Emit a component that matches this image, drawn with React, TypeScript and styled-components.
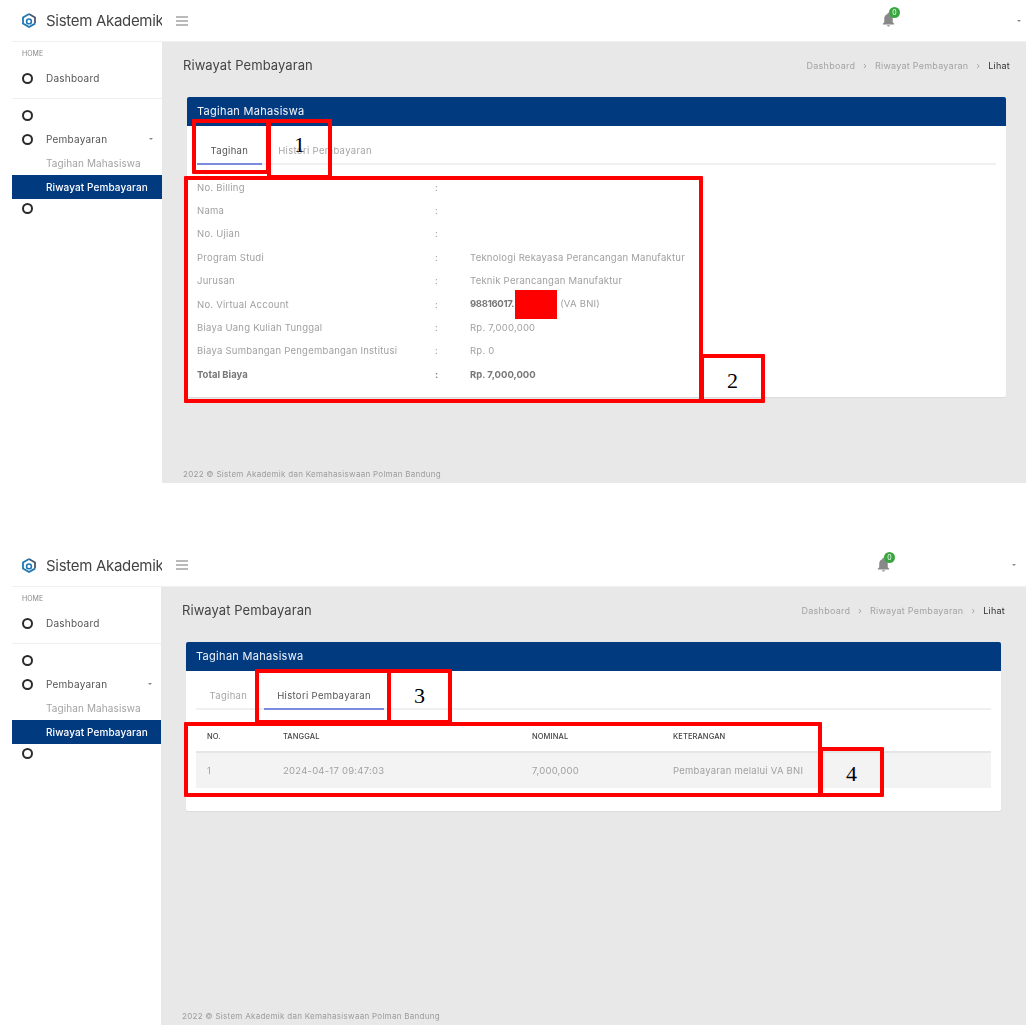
import React from "react";
import styled, { createGlobalStyle } from "styled-components";

const Global = createGlobalStyle`
  html, body { margin: 0; padding: 0; background: #fff; }
  body { font-family: "Inter", "Noto Sans", sans-serif; }
  * { box-sizing: border-box; }
`;

const Page = styled.div`
  width: 1035px;
  height: 1031px;
  overflow: hidden;
  position: relative;
`;

const Shot = styled.section<{ $top: number; $height: number }>`
  position: relative;
  margin-top: ${(p) => p.$top}px;
  margin-left: 12px;
  width: 1014px;
  height: ${(p) => p.$height}px;
`;

const Frame = styled.div`
  display: flex;
  flex-direction: column;
  height: 100%;
  filter: blur(0.3px);
`;

const TopBar = styled.header<{ $height: number; $caretRight: number }>`
  height: ${(p) => p.$height}px;
  flex: none;
  display: flex;
  align-items: center;
  background: #fff;
  border-bottom: 1px solid #f0f0f0;
  padding-right: ${(p) => p.$caretRight}px;
`;

const Brand = styled.div`
  width: 150px;
  flex: none;
  display: flex;
  align-items: center;
  gap: 10px;
  padding-left: 10px;
  overflow: hidden;
  white-space: nowrap;
  font-size: 15px;
  letter-spacing: -0.3px;
  color: #444;

  svg {
    flex: none;
  }
`;

const Burger = styled.svg`
  width: 14px;
  height: 14px;
  margin-left: 13px;
  color: #777;
`;

const BellWrap = styled.div`
  position: relative;
  width: 17px;
  height: 17px;
  margin-left: auto;
  margin-right: 120px;
  margin-bottom: 2px;
  color: #888;
`;

const Badge = styled.span`
  position: absolute;
  left: 9.5px;
  top: -3.7px;
  width: 11px;
  height: 11px;
  border-radius: 50%;
  background: #3aa63f;
  color: #fff;
  font-size: 7px;
  line-height: 11px;
  text-align: center;
`;

const Caret = styled.span`
  width: 0;
  height: 0;
  flex: none;
  border-left: 2.5px solid transparent;
  border-right: 2.5px solid transparent;
  border-top: 2.5px solid #888;
`;

const Body = styled.div`
  flex: 1;
  display: flex;
  min-height: 0;
`;

const Sidebar = styled.nav<{ $width: number }>`
  width: ${(p) => p.$width}px;
  flex: none;
  background: #fff;
  padding-top: 6px;
`;

const MenuCaption = styled.div`
  height: 11px;
  margin-bottom: 7px;
  padding-left: 10px;
  font-size: 7px;
  line-height: 11px;
  color: #888;
`;

const MenuItem = styled.div<{ $height?: number; $sub?: boolean; $active?: boolean }>`
  height: ${(p) => p.$height ?? 24}px;
  display: flex;
  align-items: center;
  padding: 0 8px 0 ${(p) => (p.$sub || p.$active ? 34 : 10)}px;
  font-size: 10px;
  letter-spacing: ${(p) => (p.$sub || p.$active ? 0.1 : 0.22)}px;
  white-space: nowrap;
  font-weight: ${(p) => (p.$active ? 500 : 400)};
  color: ${(p) => (p.$active ? "#fff" : p.$sub ? "#a3a3a3" : "#555")};
  background: ${(p) => (p.$active ? "#023a80" : "transparent")};
`;

const Ring = styled.span`
  width: 11px;
  height: 11px;
  flex: none;
  margin-right: 13px;
  border: 2px solid #2b2b2b;
  border-radius: 50%;
`;

const CaretSlot = styled.span`
  margin-left: auto;
  display: flex;
  padding-right: 1px;
`;

const MenuDivider = styled.hr`
  margin: 8px 0 4px;
  border: 0;
  border-top: 1px solid #eee;
`;

const Main = styled.main<{ $right: number }>`
  flex: 1;
  display: flex;
  flex-direction: column;
  background: #e8e8e8;
  padding: 12px ${(p) => p.$right}px 3px 21px;
  min-width: 0;
`;

const PageHead = styled.div`
  height: 22px;
  display: flex;
  align-items: center;
  justify-content: space-between;
  margin-right: -4px;
`;

const PageTitle = styled.h1`
  margin: 0;
  font-size: 13px;
  font-weight: 400;
  letter-spacing: 0.07px;
  color: #444;
`;

const Crumbs = styled.div`
  display: flex;
  gap: 8px;
  font-size: 9px;
  letter-spacing: 0.25px;
  color: #a3a3a3;
`;

const CrumbNow = styled.span`
  color: #333;
`;

const Card = styled.article`
  margin: 20.5px 0 0 4px;
  background: #fff;
  border-radius: 2px;
  box-shadow: 0 1px 1px rgba(0, 0, 0, 0.06);
`;

const CardHead = styled.div`
  height: 29.5px;
  display: flex;
  align-items: center;
  padding-left: 10px;
  background: #023a80;
  border-radius: 2px 2px 0 0;
  color: #f2f5fa;
  font-size: 11px;
  letter-spacing: 0.3px;
`;

const CardBody = styled.div`
  padding: 0 10px;
`;

const Tabs = styled.div`
  height: 39px;
  display: flex;
  gap: 3px;
  border-bottom: 2px solid #f0f0f0;
`;

const Tab = styled.div<{ $active?: boolean }>`
  height: 39px;
  padding: 18.5px 13.5px 0;
  font-size: 9.5px;
  line-height: 12px;
  letter-spacing: 0.32px;
  white-space: nowrap;
  color: ${(p) => (p.$active ? "#555" : "#a6a6a6")};
  border-bottom: 2px solid ${(p) => (p.$active ? "#7b8bdf" : "transparent")};
`;

const InfoList = styled.div`
  padding: 10.5px 0;
`;

const InfoRow = styled.div<{ $strong?: boolean }>`
  height: 23.4px;
  display: grid;
  grid-template-columns: 238px 35px 1fr;
  align-items: center;
  font-size: 9.5px;
  letter-spacing: ${(p) => (p.$strong ? 0 : 0.24)}px;
  white-space: nowrap;
  color: ${(p) => (p.$strong ? "#777" : "#a0a0a0")};
  font-weight: ${(p) => (p.$strong ? 700 : 400)};
`;

const Bold = styled.b`
  color: #777;
  letter-spacing: -0.3px;
`;

const Redaction = styled.span`
  display: inline-block;
  width: 42px;
  height: 29px;
  margin: -6px 3px -6px 1px;
  vertical-align: middle;
  background: #f00;
`;

const HistoryTable = styled.div`
  margin-top: 14px;
  padding-bottom: 23px;
`;

const HistoryRow = styled.div<{ $head?: boolean }>`
  display: grid;
  grid-template-columns: 76px 249px 141px 1fr;
  align-items: center;
  height: ${(p) => (p.$head ? 29 : 35)}px;
  padding-left: 11px;
  padding-bottom: ${(p) => (p.$head ? 2 : 0)}px;
  font-size: ${(p) => (p.$head ? 7.5 : 9.5)}px;
  letter-spacing: ${(p) => (p.$head ? 0.1 : 0.24)}px;
  font-weight: ${(p) => (p.$head ? 500 : 400)};
  color: ${(p) => (p.$head ? "#444" : "#a0a0a0")};
  background: ${(p) => (p.$head ? "#fff" : "#f3f3f3")};
  border-bottom: ${(p) => (p.$head ? "2px solid #e6e6e6" : "0")};
`;

const Footer = styled.footer`
  margin-top: auto;
  font-size: 8px;
  line-height: 12px;
  letter-spacing: 0.28px;
  color: #9c9c9c;
`;

const Note = styled.div<{ $x: number; $y: number; $w: number; $h: number; $shift?: number }>`
  position: absolute;
  left: ${(p) => p.$x - 12}px;
  top: ${(p) => p.$y}px;
  width: ${(p) => p.$w}px;
  height: ${(p) => p.$h}px;
  border: 4px solid #f00;
  border-radius: 1px;
  display: flex;
  align-items: center;
  justify-content: center;
  padding-top: ${(p) => Math.max(0, (p.$shift ?? 0) * 2)}px;
  padding-bottom: ${(p) => Math.max(0, -(p.$shift ?? 0) * 2)}px;
  font-family: "Liberation Serif", serif;
  font-size: 22px;
  color: #000;
`;

const Logo = () => (
  <svg width="14" height="15" viewBox="0 0 14 15" fill="none">
    <path d="M7 1 L13 4.4 V10.6" stroke="#45596e" strokeWidth="1.8" />
    <path d="M7 1 L1 4.4 V10.6 L7 14 L13 10.6" stroke="#1f78b4" strokeWidth="1.8" />
    <circle cx="7" cy="8.4" r="2.4" stroke="#1f78b4" strokeWidth="1.6" />
  </svg>
);

const BellIcon = () => (
  <svg width="17" height="17" viewBox="0 0 24 24" fill="currentColor">
    <path d="M12 22c1.1 0 2-.9 2-2h-4c0 1.1.9 2 2 2zm6-6v-5c0-3.07-1.63-5.64-4.5-6.32V4c0-.83-.67-1.5-1.5-1.5s-1.5.67-1.5 1.5v.68C7.64 5.36 6 7.92 6 11v5l-2 2v1h16v-1l-2-2z" />
  </svg>
);

const BurgerIcon = () => (
  <Burger viewBox="0 0 14 14" fill="none" stroke="currentColor" strokeWidth="1.1">
    <path d="M1 3h12M1 7h12M1 11h12" />
  </Burger>
);

type ChromeProps = {
  headerHeight: number;
  sidebarWidth: number;
  mainRight: number;
  children: React.ReactNode;
};

const Chrome = ({ headerHeight, sidebarWidth, mainRight, children }: ChromeProps) => (
  <Frame>
    <TopBar $height={headerHeight} $caretRight={mainRight === 25 ? 10.5 : 5.5}>
      <Brand>
        <Logo />
        Sistem Akademik
      </Brand>
      <BurgerIcon />
      <BellWrap>
        <BellIcon />
        <Badge>0</Badge>
      </BellWrap>
      <Caret />
    </TopBar>
    <Body>
      <Sidebar $width={sidebarWidth}>
        <MenuCaption>HOME</MenuCaption>
        <MenuItem>
          <Ring />
          Dashboard
        </MenuItem>
        <MenuDivider />
        <MenuItem>
          <Ring />
        </MenuItem>
        <MenuItem>
          <Ring />
          Pembayaran
          <CaretSlot>
            <Caret />
          </CaretSlot>
        </MenuItem>
        <MenuItem $sub>Tagihan Mahasiswa</MenuItem>
        <MenuItem $active>Riwayat Pembayaran</MenuItem>
        <MenuItem $height={19}>
          <Ring />
        </MenuItem>
      </Sidebar>
      <Main $right={mainRight}>
        <PageHead>
          <PageTitle>Riwayat Pembayaran</PageTitle>
          <Crumbs>
            <span>Dashboard</span>
            <span>›</span>
            <span>Riwayat Pembayaran</span>
            <span>›</span>
            <CrumbNow>Lihat</CrumbNow>
          </Crumbs>
        </PageHead>
        <Card>
          <CardHead>Tagihan Mahasiswa</CardHead>
          <CardBody>{children}</CardBody>
        </Card>
        <Footer>2022 © Sistem Akademik dan Kemahasiswaan Polman Bandung</Footer>
      </Main>
    </Body>
  </Frame>
);

const infoRows: { label: string; value: React.ReactNode; strong?: boolean }[] = [
  { label: "No. Billing", value: "" },
  { label: "Nama", value: "" },
  { label: "No. Ujian", value: "" },
  { label: "Program Studi", value: "Teknologi Rekayasa Perancangan Manufaktur" },
  { label: "Jurusan", value: "Teknik Perancangan Manufaktur" },
  {
    label: "No. Virtual Account",
    value: (
      <>
        <Bold>98816017.</Bold>
        <Redaction />
        (VA BNI)
      </>
    ),
  },
  { label: "Biaya Uang Kuliah Tunggal", value: "Rp. 7,000,000" },
  { label: "Biaya Sumbangan Pengembangan Institusi", value: "Rp. 0" },
  { label: "Total Biaya", value: "Rp. 7,000,000", strong: true },
];

export default function App() {
  return (
    <Page>
      <Global />
      <Shot $top={0} $height={483}>
        <Chrome headerHeight={42} sidebarWidth={150} mainRight={20}>
          <Tabs>
            <Tab $active>Tagihan</Tab>
            <Tab>Histori Pembayaran</Tab>
          </Tabs>
          <InfoList>
            {infoRows.map((row) => (
              <InfoRow key={row.label} $strong={row.strong}>
                <span>{row.label}</span>
                <span>:</span>
                <span>{row.value}</span>
              </InfoRow>
            ))}
          </InfoList>
        </Chrome>
        <Note $x={192} $y={119} $w={78} $h={55} />
        <Note $x={267} $y={119} $w={65} $h={60} $shift={-4}>1</Note>
        <Note $x={184} $y={176} $w={519} $h={227} />
        <Note $x={700} $y={354} $w={65} $h={49} $shift={2}>2</Note>
      </Shot>
      <Shot $top={61} $height={481}>
        <Chrome headerHeight={43} sidebarWidth={149} mainRight={25}>
          <Tabs>
            <Tab>Tagihan</Tab>
            <Tab $active>Histori Pembayaran</Tab>
          </Tabs>
          <HistoryTable>
            <HistoryRow $head>
              <span>NO.</span>
              <span>TANGGAL</span>
              <span>NOMINAL</span>
              <span>KETERANGAN</span>
            </HistoryRow>
            <HistoryRow>
              <span>1</span>
              <span>2024-04-17 09:47:03</span>
              <span>7,000,000</span>
              <span>Pembayaran melalui VA BNI</span>
            </HistoryRow>
          </HistoryTable>
        </Chrome>
        <Note $x={255} $y={125} $w={136} $h={55} />
        <Note $x={387} $y={125} $w={65} $h={55} $shift={-1}>3</Note>
        <Note $x={184} $y={178} $w={638} $h={75} />
        <Note $x={819} $y={203} $w={65} $h={50} $shift={2}>4</Note>
      </Shot>
    </Page>
  );
}
